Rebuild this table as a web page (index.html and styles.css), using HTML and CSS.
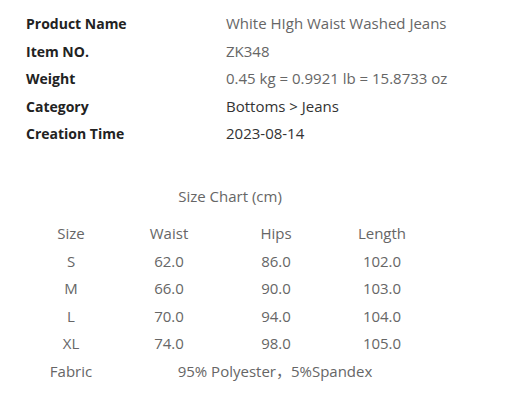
FILE: index.html
```html
<!DOCTYPE html>
<html>
<head>
<meta charset="utf-8">
<link rel="stylesheet" href="styles.css">
</head>
<body>
<div class="page">
  <div class="info">
    <div class="row"><div class="label">Product Name</div><div class="value muted">White HIgh Waist Washed Jeans</div></div>
    <div class="row"><div class="label">Item NO.</div><div class="value muted">ZK348</div></div>
    <div class="row"><div class="label">Weight</div><div class="value muted">0.45 kg = 0.9921 lb = 15.8733 oz</div></div>
    <div class="row"><div class="label">Category</div><div class="value">Bottoms &gt; Jeans</div></div>
    <div class="row"><div class="label">Creation Time</div><div class="value">2023-08-14</div></div>
  </div>
  <div class="chart">
    <div class="chart-title">Size Chart (cm)</div>
    <div class="grid">
      <div>Size</div><div>Waist</div><div>Hips</div><div>Length</div>
      <div>S</div><div>62.0</div><div>86.0</div><div>102.0</div>
      <div>M</div><div>66.0</div><div>90.0</div><div>103.0</div>
      <div>L</div><div>70.0</div><div>94.0</div><div>104.0</div>
      <div>XL</div><div>74.0</div><div>98.0</div><div>105.0</div>
      <div>Fabric</div><div class="span3">95% Polyester，5%Spandex</div>
    </div>
  </div>
</div>
</body>
</html>
```

FILE: styles.css
```css
html, body {
  margin: 0;
  padding: 0;
  background: #fff;
}
body {
  font-family: "Open Sans", "Noto Sans CJK SC", sans-serif;
  font-size: 15px;
  line-height: 27.5px;
}
.page {
  padding: 10px 0 0 26px;
}
.info .row {
  display: flex;
}
.label {
  width: 200px;
  font-size: 14px;
  font-weight: 700;
  color: #222;
}
.value {
  color: #333;
}
.value.muted {
  color: #666;
}
.chart {
  margin-top: 35px;
  width: 408px;
  color: #666;
}
.chart-title {
  text-align: center;
  margin-bottom: 10px;
}
.grid {
  display: grid;
  grid-template-columns: 90px 106px 108px 104px;
  text-align: center;
}
.span3 {
  grid-column: span 3;
}
```
